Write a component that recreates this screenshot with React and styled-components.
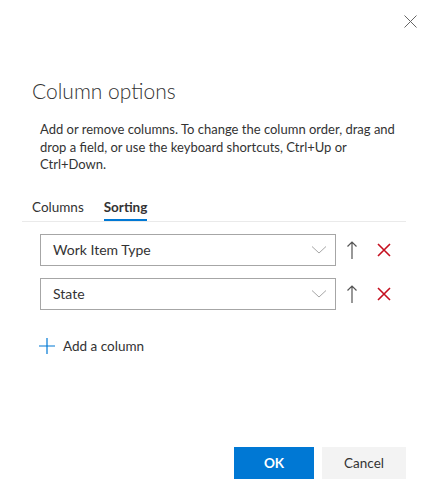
import React, { useState } from 'react';
import styled, { createGlobalStyle } from 'styled-components';

const GlobalStyle = createGlobalStyle`
  html, body {
    margin: 0;
    padding: 0;
    background: #ffffff;
  }
  body {
    font-family: "Segoe UI", Lato, "Noto Sans", sans-serif;
    color: #333333;
  }
`;

const Panel = styled.div`
  width: 436px;
  height: 500px;
  box-sizing: border-box;
  display: flex;
  flex-direction: column;
  background: #ffffff;
`;

const TopBar = styled.div`
  display: flex;
  justify-content: flex-end;
  padding: 15px 19px 0 0;
  height: 28px;
`;

const CloseButton = styled.button`
  border: none;
  background: none;
  padding: 0;
  width: 13px;
  height: 13px;
  cursor: pointer;
  display: flex;
  align-items: center;
  justify-content: center;
`;

const Title = styled.h1`
  margin: 33px 0 0 32px;
  font-size: 21px;
  font-weight: 300;
  line-height: 30px;
  color: #333333;
`;

const Description = styled.p`
  margin: 15px 30px 0 40px;
  font-size: 13px;
  line-height: 17.5px;
  color: #333333;
`;

const Tabs = styled.div`
  display: flex;
  gap: 20px;
  margin: 24px 30px 0 32px;
`;

const Tab = styled.button`
  border: none;
  background: none;
  padding: 0 0 3px 0;
  font-family: inherit;
  font-size: 13.5px;
  line-height: 18px;
  color: #333333;
  font-weight: ${(p) => (p.active ? 700 : 400)};
  border-bottom: 2px solid ${(p) => (p.active ? '#0078d4' : 'transparent')};
  cursor: pointer;
`;

const Divider = styled.div`
  height: 1px;
  background: #eaeaea;
  margin: 0 30px 0 22px;
`;

const SortList = styled.div`
  display: flex;
  flex-direction: column;
  gap: 12px;
  margin: 12px 0 0 40px;
`;

const SortRow = styled.div`
  display: flex;
  align-items: center;
`;

const Select = styled.div`
  width: 296px;
  height: 32px;
  box-sizing: border-box;
  border: 1px solid #a6a6a6;
  display: flex;
  align-items: center;
  justify-content: space-between;
  padding: 0 8px 0 12px;
  font-size: 14px;
  color: #333333;
`;

const IconButton = styled.button`
  border: none;
  background: none;
  padding: 0;
  margin-left: ${(p) => p.gap}px;
  width: ${(p) => p.size}px;
  height: 32px;
  display: flex;
  align-items: center;
  justify-content: center;
  cursor: pointer;
`;

const AddRow = styled.button`
  border: none;
  background: none;
  display: flex;
  align-items: center;
  gap: 8px;
  margin: 28px 0 0 39px;
  padding: 0;
  font-family: inherit;
  font-size: 13.5px;
  color: #333333;
  cursor: pointer;
`;

const Spacer = styled.div`
  flex: 1;
`;

const Footer = styled.div`
  display: flex;
  justify-content: flex-end;
  gap: 8px;
  padding: 0 30px 21px 0;
`;

const Button = styled.button`
  height: 32px;
  min-width: ${(p) => p.width}px;
  border: none;
  font-family: inherit;
  font-size: 13.5px;
  font-weight: ${(p) => (p.primary ? 700 : 400)};
  color: ${(p) => (p.primary ? '#ffffff' : '#333333')};
  background: ${(p) => (p.primary ? '#0078d4' : '#f3f3f3')};
  cursor: pointer;
`;

const Chevron = () => (
  <svg width="16" height="10" viewBox="0 0 16 10">
    <path d="M1 1.5 L8 8 L15 1.5" fill="none" stroke="#a6a6a6" strokeWidth="1" />
  </svg>
);

const ArrowUp = () => (
  <svg width="12" height="20" viewBox="0 0 12 20">
    <path d="M6 19 V2 M1.5 6.5 L6 2 L10.5 6.5" fill="none" stroke="#555555" strokeWidth="1.2" />
  </svg>
);

const RemoveX = () => (
  <svg width="14" height="14" viewBox="0 0 14 14">
    <path d="M1 1 L13 13 M13 1 L1 13" fill="none" stroke="#c50f1f" strokeWidth="1.6" />
  </svg>
);

const CloseX = () => (
  <svg width="13" height="13" viewBox="0 0 13 13">
    <path d="M0.5 0.5 L12.5 12.5 M12.5 0.5 L0.5 12.5" fill="none" stroke="#666666" strokeWidth="1" />
  </svg>
);

const Plus = () => (
  <svg width="16" height="16" viewBox="0 0 16 16">
    <path d="M8 0 V16 M0 8 H16" fill="none" stroke="#0078d4" strokeWidth="1.2" />
  </svg>
);

export default function App() {
  const [tab, setTab] = useState('sorting');
  const fields = ['Work Item Type', 'State'];

  return (
    <Panel>
      <GlobalStyle />
      <TopBar>
        <CloseButton aria-label="Close">
          <CloseX />
        </CloseButton>
      </TopBar>
      <Title>Column options</Title>
      <Description>
        Add or remove columns. To change the column order, drag and drop a field, or use the
        keyboard shortcuts, Ctrl+Up or Ctrl+Down.
      </Description>
      <Tabs>
        <Tab active={tab === 'columns'} onClick={() => setTab('columns')}>Columns</Tab>
        <Tab active={tab === 'sorting'} onClick={() => setTab('sorting')}>Sorting</Tab>
      </Tabs>
      <Divider />
      <SortList>
        {fields.map((f) => (
          <SortRow key={f}>
            <Select>
              <span>{f}</span>
              <Chevron />
            </Select>
            <IconButton gap={8} size={16} aria-label="Sort direction">
              <ArrowUp />
            </IconButton>
            <IconButton gap={16} size={16} aria-label="Remove">
              <RemoveX />
            </IconButton>
          </SortRow>
        ))}
      </SortList>
      <AddRow>
        <Plus />
        Add a column
      </AddRow>
      <Spacer />
      <Footer>
        <Button primary width={80}>OK</Button>
        <Button width={84}>Cancel</Button>
      </Footer>
    </Panel>
  );
}
